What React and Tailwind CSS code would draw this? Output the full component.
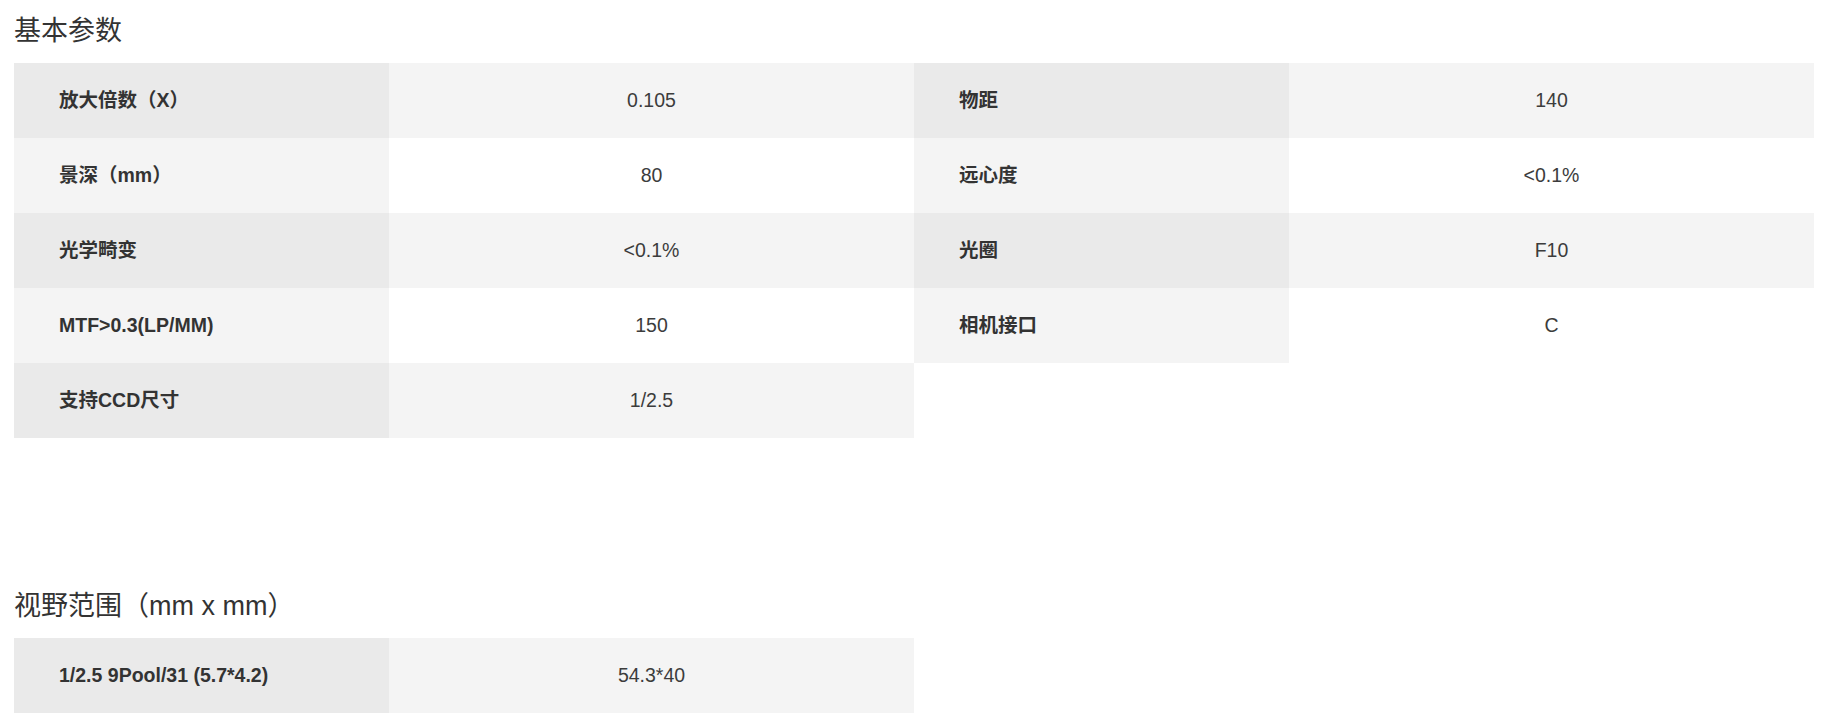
import React from 'react';

const basic = [
    ['放大倍数（X）', '0.105', '物距', '140'],
    ['景深（mm）', '80', '远心度', '<0.1%'],
    ['光学畸变', '<0.1%', '光圈', 'F10'],
    ['MTF>0.3(LP/MM)', '150', '相机接口', 'C'],
    ['支持CCD尺寸', '1/2.5'],
];

const fov = [['1/2.5 9Pool/31 (5.7*4.2)', '54.3*40']];

const Cell = ({ label, value, odd }) => (
    <>
        <div className={`h-[75px] flex items-center pl-[45px] font-bold text-[19.5px] text-[#333] ${odd ? 'bg-[#eaeaea]' : 'bg-[#f4f4f4]'}`}>
            {label}
        </div>
        <div className={`h-[75px] flex items-center justify-center text-[19.5px] text-[#3c3c3c] ${odd ? 'bg-[#f4f4f4]' : 'bg-white'}`}>
            {value}
        </div>
    </>
);

const SpecTable = ({ rows }) => (
    <div className="grid grid-cols-[375px_525px_375px_525px]">
        {rows.map((r, i) => {
            const odd = i % 2 === 0;
            return (
                <React.Fragment key={i}>
                    <Cell label={r[0]} value={r[1]} odd={odd} />
                    {r.length > 2 ? (
                        <Cell label={r[2]} value={r[3]} odd={odd} />
                    ) : (
                        <div className="col-span-2" />
                    )}
                </React.Fragment>
            );
        })}
    </div>
);

const Heading = ({ children }) => (
    <div className="h-[63px] flex items-center text-[27px] text-[#333] font-normal">{children}</div>
);

export default function App() {
    return (
        <div className="bg-white min-h-[718px] pl-[14px] w-[1814px]" style={{ fontFamily: '"Liberation Sans", "Noto Sans CJK SC", sans-serif' }}>
            <Heading>基本参数</Heading>
            <SpecTable rows={basic} />
            <div className="mt-[137px]">
                <Heading>视野范围（mm x mm）</Heading>
                <SpecTable rows={fov} />
            </div>
        </div>
    );
}
